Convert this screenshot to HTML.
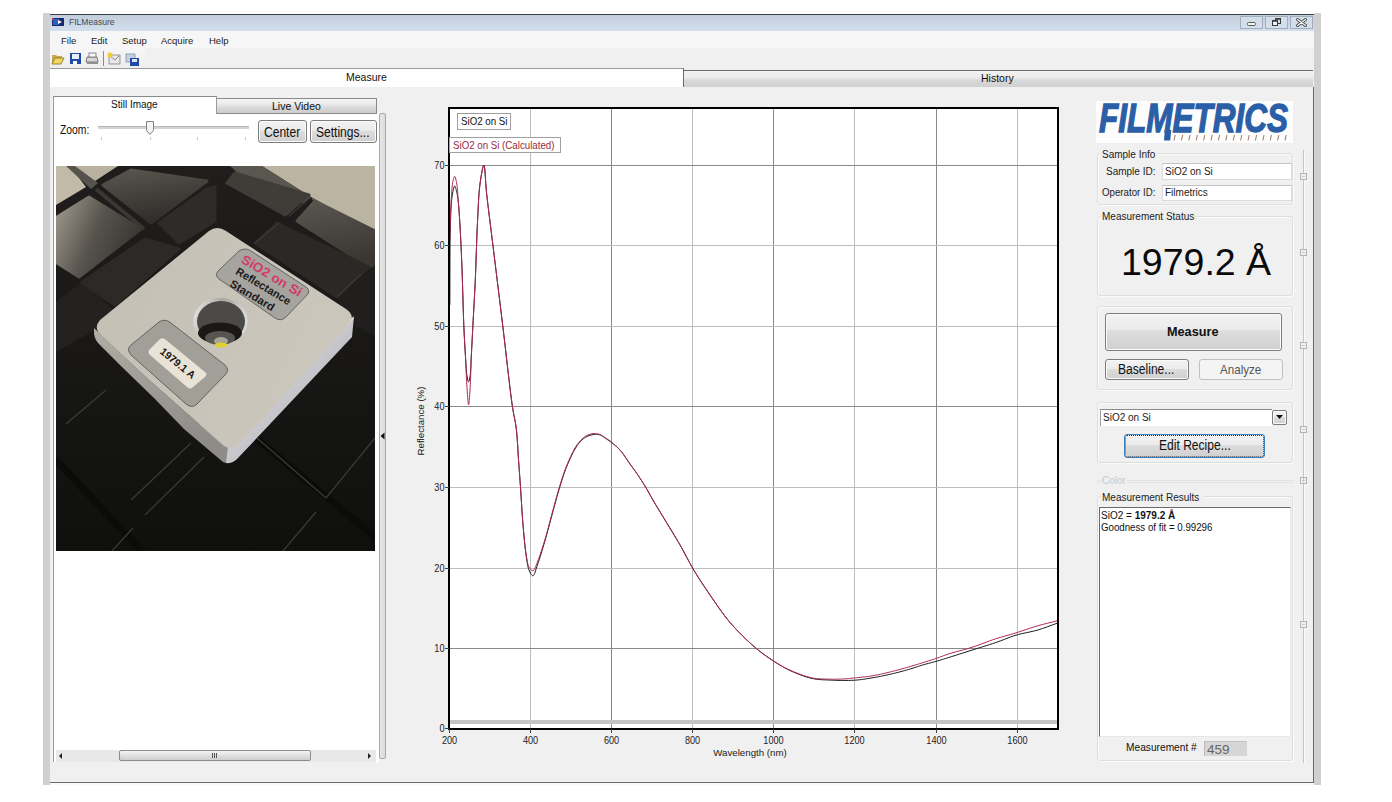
<!DOCTYPE html>
<html><head><meta charset="utf-8">
<style>
*{margin:0;padding:0;box-sizing:border-box}
html,body{width:1392px;height:802px;overflow:hidden;background:#fff;font-family:"Liberation Sans",sans-serif;color:#111}
.abs{position:absolute}
.t{position:absolute;white-space:nowrap;line-height:1}
.btn{position:absolute;border:1px solid #7c7c7c;border-radius:3px;background:linear-gradient(#f2f2f2 0%,#ebebeb 45%,#dddddd 46%,#d0d0d0 100%);box-shadow:inset 0 0 0 1px #fbfbfb}
.grp{position:absolute;border:1px solid #dedede;border-radius:3px;box-shadow:1px 1px 0 #fafafa inset, 1px 1px 0 #fafafa}
.sx{transform-origin:0 0;transform:scaleX(.86)}
.tb{position:absolute;background:#fff;border:1px solid #dcdcdc;border-top-color:#c4c4c4}
</style></head><body>
<!-- window frame -->
<div class="abs" style="left:43px;top:13px;width:7px;height:772px;background:#d0d0d0"></div>
<div class="abs" style="left:1314px;top:13px;width:7px;height:772px;background:#d0d0d0"></div>
<div class="abs" style="left:50px;top:14px;width:1264px;height:1px;background:#404040"></div>
<div class="abs" style="left:50px;top:15px;width:1264px;height:16px;background:linear-gradient(#c3cedd,#d3dfed)"></div>
<div class="abs" style="left:50px;top:31px;width:1264px;height:17px;background:#f6f6f6"></div>
<div class="abs" style="left:50px;top:48px;width:1264px;height:20px;background:#f0f0f0"></div>
<div class="abs" style="left:50px;top:48px;width:95px;height:19px;background:linear-gradient(#f6f6f6,#eeeeee)"></div>
<!-- title -->
<svg class="abs" style="left:52px;top:18px" width="12" height="8" viewBox="0 0 12 8"><rect width="12" height="8" fill="#1a2a6a"/><rect x="1" y="1" width="6" height="6" fill="#2a60c0"/><path d="M6,2 L10,4 L6,6z" fill="#fff"/><rect x="0" y="0" width="2" height="2" fill="#c03060"/></svg>
<div class="t" style="left:69px;top:18px;font-size:9px;color:#4a4a4a;transform-origin:0 0;transform:scaleX(.95)">FILMeasure</div>
<!-- title buttons -->
<svg class="abs" style="left:1236px;top:14px" width="80" height="17" viewBox="1236 14 80 17">
<rect x="1240.5" y="16.5" width="22" height="12" fill="#d3deeb" stroke="#a4adba"/>
<rect x="1265.5" y="16.5" width="22" height="12" fill="#d3deeb" stroke="#a4adba"/>
<rect x="1290.5" y="16.5" width="22" height="12" fill="#d3deeb" stroke="#a4adba"/>
<rect x="1247.5" y="22.5" width="8" height="3" rx="1" fill="#f4f4f4" stroke="#5a5a5a"/>
<rect x="1275.5" y="18.5" width="5" height="5" fill="none" stroke="#3a3a3a"/><line x1="1275" y1="19" x2="1281" y2="19" stroke="#3a3a3a" stroke-width="1.5"/>
<rect x="1272.5" y="20.5" width="5" height="5" fill="#e8eef6" stroke="#3a3a3a"/><line x1="1272" y1="21" x2="1278" y2="21" stroke="#3a3a3a" stroke-width="1.5"/>
<path d="M1297.5,19.5 L1305.5,25.5 M1305.5,19.5 L1297.5,25.5" stroke="#4a4a4a" stroke-width="3" stroke-linecap="round"/>
<path d="M1297.5,19.5 L1305.5,25.5 M1305.5,19.5 L1297.5,25.5" stroke="#fafafa" stroke-width="1.2" stroke-linecap="round"/>
</svg>
<!-- menu -->
<div class="t" style="left:61px;top:36px;font-size:9.5px;color:#222">File</div>
<div class="t" style="left:91px;top:36px;font-size:9.5px;color:#222">Edit</div>
<div class="t" style="left:122px;top:36px;font-size:9.5px;color:#222">Setup</div>
<div class="t" style="left:161px;top:36px;font-size:9.5px;color:#222">Acquire</div>
<div class="t" style="left:209px;top:36px;font-size:9.5px;color:#222">Help</div>
<!-- toolbar icons -->
<svg class="abs" style="left:51px;top:51px" width="90" height="15" viewBox="0 0 90 15">
 <path d="M1,4 L5,4 L6,5 L11,5 L11,7 L4,7 L1,13z" fill="#c8a850"/><path d="M1,13 L4,7 L13,7 L10,13z" fill="#f0d860"/><path d="M1,13 L4,7 L13,7 L10,13z" fill="none" stroke="#8a6a20" stroke-width="0.8"/>
 <rect x="19" y="2" width="11" height="11" fill="#1e4aa8"/><rect x="21" y="3" width="7" height="5" fill="#e8eef8"/><rect x="22" y="10" width="4" height="3" fill="#fff"/>
 <path d="M36,6 L46,6 L47,11 L35,11z" fill="#d8d8d8" stroke="#606060" stroke-width="0.8"/><rect x="38" y="2" width="7" height="4" fill="#f8f8f8" stroke="#707070" stroke-width="0.8"/><rect x="36" y="11" width="11" height="2" fill="#909090"/>
 <rect x="52" y="0" width="1" height="15" fill="#8a8a8a"/>
 <rect x="58" y="4" width="11" height="9" fill="#e8e8e8" stroke="#808080" stroke-width="0.8"/><path d="M59,5 L64,9 L68,5" fill="none" stroke="#707070" stroke-width="0.8"/><circle cx="59" cy="4" r="2.5" fill="#e8d030"/>
 <rect x="75" y="3" width="9" height="8" fill="#c8d0e0" stroke="#8090a8" stroke-width="0.8"/><rect x="79" y="7" width="9" height="8" fill="#1e4aa8"/><rect x="81" y="8" width="5" height="3" fill="#e0e8f8"/>
</svg>
<!-- main tabs -->
<div class="abs" style="left:50px;top:68px;width:1264px;height:19px;background:#f0f0f0"></div>
<div class="abs" style="left:50px;top:68px;width:634px;height:19px;background:#fff;border-top:1px solid #9a9a9a;border-right:1px solid #6a6a6a"></div>
<div class="t" style="left:346px;top:72px;font-size:10.5px;color:#111">Measure</div>
<div class="abs" style="left:684px;top:70px;width:629px;height:17px;border-top:1px solid #6a6a6a;background:linear-gradient(#f2f2f2 0%,#ececec 40%,#d8d8d8 60%,#d0d0d0 100%)"></div>
<div class="t" style="left:981px;top:73px;font-size:10.5px;color:#111">History</div>
<!-- page body -->
<div class="abs" style="left:50px;top:87px;width:1264px;height:696px;background:#f0f0f0;border-right:1px solid #6a6a6a;border-bottom:1px solid #6a6a6a"></div>
<div class="abs" style="left:50px;top:783px;width:1264px;height:2px;background:#fafafa"></div>

<!-- left panel -->
<div class="abs" style="left:53px;top:113px;width:326px;height:649px;background:#fff;border-left:1px solid #9a9a9a"></div>
<div class="abs" style="left:53px;top:96px;width:164px;height:18px;background:#fff;border-top:1px solid #8a8a8a;border-left:1px solid #9a9a9a;border-right:1px solid #9a9a9a"></div>
<div class="t" style="left:111px;top:100px;font-size:10px;color:#111">Still Image</div>
<div class="abs" style="left:217px;top:98px;width:160px;height:16px;border:1px solid #8a8a8a;border-left:none;background:linear-gradient(#f4f4f4 0%,#ececec 35%,#d6d6d6 65%,#cdcdcd 100%)"></div>
<div class="t" style="left:272px;top:101px;font-size:10.5px;color:#111">Live Video</div>
<div class="t sx" style="left:60px;top:124px;font-size:12px;color:#111">Zoom:</div>
<div class="abs" style="left:98px;top:126px;width:151px;height:3px;background:#d4d4d4;border-top:1px solid #b8b8b8"></div>
<svg class="abs" style="left:145px;top:120px" width="10" height="16" viewBox="0 0 10 16"><path d="M1.5,1.5 h7 v9 l-3.5,4 l-3.5,-4z" fill="#f4f4f4" stroke="#808080"/></svg>
<div class="abs" style="left:101px;top:137px;width:1px;height:3px;background:#c8c8c8"></div>
<div class="abs" style="left:150px;top:137px;width:1px;height:3px;background:#c8c8c8"></div>
<div class="abs" style="left:197px;top:137px;width:1px;height:3px;background:#c8c8c8"></div>
<div class="abs" style="left:245px;top:137px;width:1px;height:3px;background:#c8c8c8"></div>
<div class="btn" style="left:258px;top:120px;width:49px;height:23px"></div>
<div class="t sx" style="left:264px;top:125px;font-size:14px;color:#111">Center</div>
<div class="btn" style="left:310px;top:120px;width:67px;height:23px"></div>
<div class="t sx" style="left:316px;top:125px;font-size:14px;color:#111">Settings...</div>
<!-- photo -->
<svg class="abs" style="left:56px;top:166px" width="319" height="385" viewBox="56 166 319 385"><defs>
<linearGradient id="pbg" x1="0" y1="0" x2="0" y2="1"><stop offset="0" stop-color="#1f1e1c"/><stop offset="0.4" stop-color="#1a1917"/><stop offset="1" stop-color="#0f0f0e"/></linearGradient>
<linearGradient id="tile1" x1="0" y1="0.3" x2="1" y2="0.7"><stop offset="0" stop-color="#948e84"/><stop offset="0.45" stop-color="#56524c"/><stop offset="1" stop-color="#34312d"/></linearGradient>
<linearGradient id="tile2" x1="0" y1="0" x2="0.3" y2="1"><stop offset="0" stop-color="#5a5650"/><stop offset="0.5" stop-color="#45423d"/><stop offset="1" stop-color="#302e2b"/></linearGradient>
<linearGradient id="tileB" x1="0" y1="0" x2="0.2" y2="1"><stop offset="0" stop-color="#5a5650"/><stop offset="1" stop-color="#3a3733"/></linearGradient>
<linearGradient id="blk" x1="0" y1="0" x2="1" y2="0.4"><stop offset="0" stop-color="#c4bfb3"/><stop offset="1" stop-color="#ccc7bd"/></linearGradient>
<linearGradient id="sideL" x1="0" y1="0" x2="0.3" y2="1"><stop offset="0" stop-color="#b0ada6"/><stop offset="1" stop-color="#8e8c88"/></linearGradient>
<linearGradient id="sideR" x1="0" y1="0" x2="1" y2="1"><stop offset="0" stop-color="#e8e8ec"/><stop offset="1" stop-color="#a8a8ac"/></linearGradient>
<filter id="soft" x="-5%" y="-5%" width="110%" height="110%"><feGaussianBlur stdDeviation="0.9"/></filter>
<linearGradient id="ring" x1="0" y1="0" x2="1" y2="0.3"><stop offset="0" stop-color="#f0f0f0"/><stop offset="0.5" stop-color="#a8a6a0"/><stop offset="1" stop-color="#d8d8d8"/></linearGradient>
</defs><rect x="56" y="166" width="319" height="385" fill="url(#pbg)"/><g stroke-linejoin="round"><polygon points="56,166 70,166 86,187 56,205" fill="#c2baa8" /><polygon points="72,166 118,166 95,181" fill="#b9b19f" /><polygon points="262,166 375,166 375,233 311,197" fill="#bcb4a2" /><polygon points="66,166 75,166 98,183 91,189" fill="#56534d" /><line x1="96" y1="189" x2="144" y2="229" stroke="#3a3834" stroke-width="4"/><polygon points="230,166 262,166 311,197 303,203 240,175" fill="#5a5650" /><polygon points="311,197 375,233 375,240 315,204" fill="#66625b" /><polygon points="57,217 89,197 141,229 79,277 57,263" fill="url(#tile1)" stroke="url(#tile1)" stroke-width="3" stroke-linejoin="round"/><polygon points="103,185 131,170 207,181 151,223" fill="url(#tile2)" stroke="url(#tile2)" stroke-width="3" stroke-linejoin="round"/><polygon points="159,223 207,189 215,187 215,221 179,243" fill="#2e2c29" stroke="#2e2c29" stroke-width="3" stroke-linejoin="round"/><polygon points="81,283 145,239 179,249 115,305" fill="#2c2a27" stroke="#2c2a27" stroke-width="3" stroke-linejoin="round"/><polygon points="57,303 81,285 111,309 95,328 57,350" fill="#232220" stroke="#232220" stroke-width="3" stroke-linejoin="round"/><polygon points="227,183 235,173 309,195 285,215" fill="#403d39" stroke="#403d39" stroke-width="3" stroke-linejoin="round"/><polygon points="297,221 315,201 375,231 375,265 369,267" fill="url(#tileB)" stroke="url(#tileB)" stroke-width="3" stroke-linejoin="round"/><polygon points="255,243 277,223 369,267 337,297" fill="#2b2926" stroke="#2b2926" stroke-width="3" stroke-linejoin="round"/><polygon points="339,299 375,267 375,335 352,322" fill="#201f1d" stroke="#201f1d" stroke-width="3" stroke-linejoin="round"/><line x1="55" y1="459" x2="142" y2="551" stroke="#0b0b0a" stroke-width="7"/><line x1="253" y1="436" x2="375" y2="537" stroke="#0b0b0a" stroke-width="7"/></g><line x1="255" y1="243" x2="279" y2="223" stroke="#3c3a37" stroke-width="1.2"/><line x1="289" y1="216" x2="311" y2="197" stroke="#3c3a37" stroke-width="1.2"/><line x1="337" y1="297" x2="361" y2="274" stroke="#3c3a37" stroke-width="1.2"/><line x1="66" y1="424" x2="106" y2="390" stroke="#3c3a37" stroke-width="1.2"/><line x1="131" y1="500" x2="191" y2="443" stroke="#3c3a37" stroke-width="1.2"/><line x1="145" y1="515" x2="204" y2="457" stroke="#3c3a37" stroke-width="1.2"/><line x1="112" y1="551" x2="133" y2="528" stroke="#3c3a37" stroke-width="1.2"/><line x1="326" y1="498" x2="375" y2="438" stroke="#3c3a37" stroke-width="1.2"/><line x1="283" y1="551" x2="316" y2="512" stroke="#3c3a37" stroke-width="1.2"/><line x1="257" y1="438" x2="326" y2="498" stroke="#3c3a37" stroke-width="1.2"/><path d="M94,328 L148,379 L198,423 L236,447 L233,458 Q230,465 223,462 L184,429 L155,399 L122,367 L99,344 Q95,340 94,334 Z" fill="url(#sideL)"/><path d="M228,446 L354,316 L352,337 L238,458 Q233,464 226,463 Z" fill="url(#sideR)"/><line x1="236" y1="445" x2="353" y2="318" stroke="#f2f2f4" stroke-width="1.6"/><path d="M209,231 Q217,225 226,231 L346,309 Q356,316 349,324 L240,443 Q233,451 224,446 L198,423 L148,379 L101,335 Q93,328 100,320 Z" fill="url(#blk)"/><path d="M239,251 Q245,247 251,251 L306,287 Q311,291 307,295 L286,317 Q281,322 275,318 L219,279 Q214,275 219,270 Z" fill="#a6a49e" stroke="#5a5a58" stroke-width="0.9"/><g font-family="Liberation Sans, sans-serif" font-weight="bold" text-anchor="middle"><text transform="translate(269.5,279.5) rotate(31)" font-size="13" fill="#d23a6c" textLength="68" lengthAdjust="spacingAndGlyphs">SiO2 on Si</text><text transform="translate(261.4,289.4) rotate(31)" font-size="11" fill="#1a1a1a" textLength="62" lengthAdjust="spacingAndGlyphs">Reflectance</text><text transform="translate(250.4,298.6) rotate(31)" font-size="11" fill="#1a1a1a" textLength="50" lengthAdjust="spacingAndGlyphs">Standard</text></g><ellipse cx="220.5" cy="321" rx="27.2" ry="23.2" fill="url(#ring)"/><ellipse cx="221" cy="321.5" rx="24" ry="20.5" fill="#4c4a46"/><ellipse cx="220" cy="333" rx="22" ry="10.5" fill="#1a1918"/><ellipse cx="220" cy="338" rx="15" ry="7" fill="#57554f"/><ellipse cx="221" cy="341" rx="7" ry="4" fill="#a8a498"/><ellipse cx="221" cy="345" rx="6.5" ry="2.6" fill="#ddd030"/><path d="M159,322 Q165,318 171,323 L225,365 Q230,370 225,375 L197,404 Q192,409 186,404 L131,355 Q126,349 131,345 Z" fill="#a19f98" stroke="#5a5a58" stroke-width="0.9"/><path d="M160,339 Q163,337 166,340 L205,372 Q208,374 205,377 L193,387 Q190,390 187,387 L150,355 Q147,352 150,349 Z" fill="#e9e2d6"/><text transform="translate(175.5,366) rotate(39)" font-family="Liberation Sans, sans-serif" font-weight="bold" font-size="10.5" text-anchor="middle" fill="#151515" textLength="42" lengthAdjust="spacingAndGlyphs">1979.1 A</text></svg>
<!-- left scrollbars -->
<div class="abs" style="left:379px;top:113px;width:7px;height:646px;border:1px solid #a8a8a8;border-radius:2px;background:linear-gradient(90deg,#e8e8e8,#dadada)"></div>
<svg class="abs" style="left:380px;top:432px" width="6" height="8" viewBox="0 0 6 8"><path d="M4.5,0.5 L0.5,4 L4.5,7.5z" fill="#111"/></svg>
<div class="abs" style="left:56px;top:750px;width:320px;height:12px;background:#e8e8e8"></div>
<div class="abs" style="left:119px;top:750px;width:192px;height:11px;border:1px solid #8c8c8c;border-radius:2px;background:linear-gradient(#f4f4f4,#dedede 55%,#cfcfcf)"></div>
<div class="abs" style="left:212px;top:753px;width:1px;height:5px;background:#555"></div>
<div class="abs" style="left:214px;top:753px;width:1px;height:5px;background:#555"></div>
<div class="abs" style="left:216px;top:753px;width:1px;height:5px;background:#555"></div>
<svg class="abs" style="left:58px;top:752px" width="6" height="8"><path d="M4,1 L1,4 L4,7z" fill="#222"/></svg>
<svg class="abs" style="left:366px;top:752px" width="6" height="8"><path d="M2,1 L5,4 L2,7z" fill="#222"/></svg>

<!-- chart -->
<svg class="abs" style="left:0;top:0" width="1392" height="802" viewBox="0 0 1392 802">
<rect x="449" y="108" width="609" height="621" fill="#fff"/>
<line x1="530.5" y1="109" x2="530.5" y2="728" stroke="#bdbdbd" stroke-width="1"/><line x1="611.5" y1="109" x2="611.5" y2="728" stroke="#8a8a8a" stroke-width="1"/><line x1="692.5" y1="109" x2="692.5" y2="728" stroke="#bdbdbd" stroke-width="1"/><line x1="773.5" y1="109" x2="773.5" y2="728" stroke="#8a8a8a" stroke-width="1"/><line x1="854.5" y1="109" x2="854.5" y2="728" stroke="#bdbdbd" stroke-width="1"/><line x1="936.5" y1="109" x2="936.5" y2="728" stroke="#8a8a8a" stroke-width="1"/><line x1="1017.5" y1="109" x2="1017.5" y2="728" stroke="#bdbdbd" stroke-width="1"/><line x1="450" y1="648.5" x2="1058" y2="648.5" stroke="#8a8a8a" stroke-width="1"/><line x1="450" y1="568.5" x2="1058" y2="568.5" stroke="#bdbdbd" stroke-width="1"/><line x1="450" y1="487.5" x2="1058" y2="487.5" stroke="#bdbdbd" stroke-width="1"/><line x1="450" y1="406.5" x2="1058" y2="406.5" stroke="#8a8a8a" stroke-width="1"/><line x1="450" y1="326.5" x2="1058" y2="326.5" stroke="#bdbdbd" stroke-width="1"/><line x1="450" y1="245.5" x2="1058" y2="245.5" stroke="#bdbdbd" stroke-width="1"/><line x1="450" y1="165.5" x2="1058" y2="165.5" stroke="#8a8a8a" stroke-width="1"/>
<rect x="450" y="720" width="608" height="4" fill="#c4c4c4"/>
<path d="M449.80,305.00 L449.86,294.86 L449.89,284.36 L449.91,273.70 L449.93,263.12 L449.98,252.84 L450.06,243.07 L450.20,234.05 L450.40,226.00 L450.54,221.51 L450.68,217.24 L450.82,213.18 L450.98,209.35 L451.18,205.75 L451.42,202.38 L451.72,199.27 L452.10,196.40 L452.37,194.69 L452.67,192.93 L452.99,191.19 L453.33,189.57 L453.68,188.15 L454.03,187.02 L454.37,186.28 L454.70,186.00 L454.93,186.13 L455.16,186.52 L455.40,187.10 L455.63,187.83 L455.86,188.66 L456.08,189.53 L456.30,190.39 L456.50,191.20 L456.76,192.24 L456.99,193.32 L457.22,194.44 L457.43,195.61 L457.63,196.85 L457.83,198.15 L458.01,199.53 L458.20,201.00 L458.48,203.54 L458.74,206.34 L458.97,209.34 L459.19,212.51 L459.40,215.81 L459.60,219.18 L459.80,222.59 L460.00,226.00 L460.24,230.12 L460.47,234.41 L460.70,238.84 L460.92,243.34 L461.13,247.86 L461.33,252.34 L461.52,256.74 L461.70,261.00 L461.85,264.74 L461.99,268.37 L462.11,271.95 L462.23,275.49 L462.35,279.03 L462.46,282.61 L462.58,286.26 L462.70,290.00 L462.83,294.26 L462.96,298.63 L463.08,303.07 L463.20,307.55 L463.33,312.06 L463.47,316.55 L463.63,321.01 L463.80,325.40 L463.99,329.66 L464.20,334.00 L464.42,338.36 L464.65,342.68 L464.88,346.90 L465.12,350.99 L465.36,354.87 L465.60,358.50 L465.76,361.02 L465.91,363.48 L466.05,365.88 L466.19,368.18 L466.35,370.36 L466.53,372.41 L466.75,374.30 L467.00,376.00 L467.17,376.99 L467.36,378.01 L467.56,379.02 L467.77,379.96 L467.98,380.78 L468.19,381.42 L468.40,381.85 L468.60,382.00 L468.80,381.85 L469.00,381.42 L469.20,380.77 L469.40,379.95 L469.59,379.02 L469.77,378.01 L469.94,376.99 L470.10,376.00 L470.32,374.29 L470.50,372.41 L470.64,370.36 L470.75,368.18 L470.86,365.88 L470.96,363.48 L471.07,361.02 L471.20,358.50 L471.40,354.90 L471.60,351.08 L471.81,347.08 L472.02,342.93 L472.23,338.65 L472.45,334.29 L472.67,329.86 L472.90,325.40 L473.18,320.11 L473.48,314.68 L473.79,309.14 L474.10,303.50 L474.41,297.75 L474.72,291.91 L475.02,285.99 L475.30,280.00 L475.59,273.01 L475.87,265.71 L476.12,258.23 L476.37,250.68 L476.63,243.17 L476.89,235.81 L477.18,228.71 L477.50,222.00 L477.76,216.77 L478.00,211.62 L478.24,206.58 L478.49,201.67 L478.78,196.92 L479.12,192.38 L479.52,188.06 L480.00,184.00 L480.41,181.04 L480.89,177.88 L481.40,174.69 L481.94,171.68 L482.47,169.02 L482.99,166.90 L483.48,165.49 L483.90,165.00 L484.32,165.76 L484.67,167.81 L484.96,170.89 L485.23,174.74 L485.50,179.07 L485.78,183.64 L486.11,188.17 L486.50,192.40 L487.14,198.17 L487.86,204.29 L488.64,210.70 L489.46,217.39 L490.32,224.29 L491.20,231.37 L492.10,238.59 L493.00,245.90 L494.12,255.07 L495.29,264.63 L496.50,274.49 L497.73,284.57 L498.98,294.78 L500.24,305.02 L501.48,315.23 L502.70,325.30 L503.94,335.75 L505.21,346.73 L506.48,357.93 L507.75,369.04 L509.00,379.75 L510.20,389.76 L511.34,398.74 L512.40,406.40 L512.93,409.73 L513.45,412.66 L513.96,415.30 L514.45,417.75 L514.93,420.14 L515.38,422.57 L515.81,425.15 L516.20,428.00 L516.64,431.94 L517.01,436.13 L517.34,440.51 L517.63,444.98 L517.90,449.48 L518.16,453.92 L518.42,458.22 L518.70,462.30 L518.94,465.58 L519.17,468.71 L519.39,471.74 L519.61,474.73 L519.82,477.73 L520.04,480.79 L520.27,483.96 L520.50,487.30 L520.79,491.64 L521.08,496.20 L521.37,500.92 L521.66,505.74 L521.97,510.59 L522.29,515.41 L522.64,520.14 L523.00,524.70 L523.35,528.83 L523.71,533.02 L524.09,537.20 L524.47,541.31 L524.88,545.31 L525.30,549.13 L525.74,552.71 L526.20,556.00 L526.50,558.07 L526.79,560.06 L527.07,561.96 L527.36,563.78 L527.69,565.49 L528.06,567.11 L528.49,568.61 L529.00,570.00 L529.41,570.97 L529.87,571.97 L530.36,572.96 L530.87,573.88 L531.39,574.67 L531.91,575.29 L532.42,575.69 L532.90,575.80 L533.49,575.47 L534.06,574.66 L534.61,573.46 L535.16,571.97 L535.70,570.29 L536.25,568.50 L536.82,566.71 L537.40,565.00 L538.29,562.48 L539.21,559.72 L540.15,556.79 L541.11,553.72 L542.07,550.56 L543.03,547.35 L543.98,544.15 L544.90,541.00 L545.87,537.64 L546.83,534.20 L547.78,530.71 L548.72,527.20 L549.66,523.70 L550.58,520.23 L551.50,516.82 L552.40,513.50 L553.20,510.57 L553.98,507.68 L554.74,504.83 L555.50,502.02 L556.26,499.23 L557.02,496.47 L557.80,493.73 L558.60,491.00 L559.38,488.40 L560.17,485.78 L560.97,483.17 L561.77,480.59 L562.58,478.05 L563.39,475.60 L564.20,473.24 L565.00,471.00 L565.62,469.33 L566.24,467.74 L566.86,466.20 L567.48,464.72 L568.10,463.26 L568.72,461.83 L569.36,460.42 L570.00,459.00 L570.60,457.68 L571.21,456.37 L571.82,455.08 L572.43,453.80 L573.06,452.54 L573.69,451.32 L574.34,450.14 L575.00,449.00 L575.59,448.03 L576.18,447.09 L576.77,446.17 L577.38,445.28 L578.00,444.42 L578.64,443.58 L579.31,442.78 L580.00,442.00 L580.68,441.28 L581.38,440.58 L582.09,439.89 L582.82,439.24 L583.57,438.62 L584.35,438.03 L585.16,437.49 L586.00,437.00 L586.92,436.53 L587.90,436.10 L588.91,435.72 L589.95,435.37 L590.99,435.07 L592.03,434.83 L593.04,434.63 L594.00,434.50 L594.79,434.43 L595.57,434.40 L596.34,434.40 L597.10,434.44 L597.85,434.52 L598.58,434.64 L599.30,434.80 L600.00,435.00 L600.66,435.25 L601.30,435.56 L601.92,435.91 L602.53,436.29 L603.13,436.71 L603.74,437.13 L604.36,437.57 L605.00,438.00 L605.76,438.50 L606.54,439.01 L607.32,439.54 L608.12,440.08 L608.92,440.65 L609.74,441.24 L610.56,441.86 L611.40,442.50 L612.43,443.31 L613.49,444.13 L614.57,444.99 L615.67,445.89 L616.76,446.83 L617.86,447.83 L618.94,448.88 L620.00,450.00 L621.29,451.51 L622.57,453.17 L623.85,454.94 L625.12,456.78 L626.37,458.65 L627.60,460.50 L628.81,462.30 L630.00,464.00 L631.02,465.42 L632.02,466.80 L633.00,468.15 L633.97,469.48 L634.93,470.80 L635.89,472.14 L636.84,473.50 L637.80,474.90 L638.82,476.41 L639.84,477.95 L640.85,479.50 L641.87,481.07 L642.87,482.65 L643.87,484.24 L644.84,485.82 L645.80,487.40 L646.70,488.92 L647.56,490.42 L648.39,491.91 L649.22,493.41 L650.05,494.93 L650.92,496.49 L651.83,498.11 L652.80,499.80 L654.14,502.08 L655.57,504.47 L657.06,506.93 L658.60,509.47 L660.18,512.06 L661.78,514.69 L663.39,517.34 L665.00,520.00 L666.81,522.99 L668.67,526.03 L670.56,529.13 L672.48,532.27 L674.39,535.42 L676.30,538.59 L678.17,541.75 L680.00,544.90 L681.75,548.01 L683.46,551.14 L685.13,554.28 L686.79,557.42 L688.46,560.55 L690.15,563.68 L691.89,566.80 L693.70,569.90 L695.60,573.04 L697.54,576.15 L699.51,579.25 L701.51,582.34 L703.55,585.43 L705.63,588.54 L707.74,591.65 L709.90,594.80 L712.24,598.22 L714.60,601.68 L717.00,605.18 L719.45,608.68 L721.95,612.17 L724.52,615.62 L727.17,619.00 L729.90,622.30 L732.81,625.62 L735.85,628.95 L738.99,632.25 L742.19,635.49 L745.41,638.64 L748.61,641.66 L751.76,644.53 L754.80,647.20 L757.21,649.22 L759.58,651.14 L761.93,652.95 L764.27,654.68 L766.58,656.33 L768.89,657.93 L771.20,659.48 L773.50,661.00 L775.56,662.34 L777.58,663.63 L779.57,664.87 L781.57,666.06 L783.59,667.22 L785.66,668.35 L787.78,669.44 L790.00,670.50 L792.60,671.68 L795.34,672.85 L798.16,674.00 L801.04,675.09 L803.92,676.12 L806.77,677.04 L809.54,677.84 L812.20,678.50 L814.28,678.92 L816.28,679.23 L818.21,679.45 L820.13,679.61 L822.06,679.73 L824.04,679.82 L826.11,679.90 L828.30,680.00 L831.33,680.14 L834.57,680.26 L837.97,680.36 L841.44,680.43 L844.93,680.45 L848.34,680.43 L851.63,680.35 L854.70,680.20 L857.04,680.03 L859.29,679.81 L861.47,679.55 L863.59,679.26 L865.69,678.94 L867.77,678.60 L869.87,678.25 L872.00,677.90 L874.16,677.53 L876.31,677.15 L878.46,676.75 L880.62,676.33 L882.76,675.89 L884.91,675.44 L887.06,674.98 L889.20,674.50 L891.36,674.00 L893.51,673.49 L895.66,672.96 L897.81,672.42 L899.96,671.86 L902.11,671.29 L904.25,670.70 L906.40,670.10 L908.58,669.46 L910.79,668.78 L913.01,668.08 L915.22,667.37 L917.41,666.66 L919.56,665.97 L921.66,665.31 L923.70,664.70 L925.37,664.23 L926.99,663.78 L928.57,663.36 L930.13,662.96 L931.67,662.56 L933.21,662.15 L934.75,661.74 L936.30,661.30 L937.83,660.85 L939.32,660.41 L940.79,659.96 L942.27,659.51 L943.77,659.04 L945.33,658.55 L946.97,658.04 L948.70,657.50 L951.26,656.70 L954.01,655.83 L956.90,654.91 L959.89,653.96 L962.94,652.98 L966.00,652.01 L969.04,651.04 L972.00,650.10 L974.93,649.18 L977.89,648.26 L980.85,647.35 L983.80,646.43 L986.75,645.52 L989.67,644.59 L992.56,643.65 L995.40,642.70 L998.03,641.77 L1000.61,640.80 L1003.16,639.82 L1005.69,638.83 L1008.22,637.86 L1010.75,636.92 L1013.31,636.02 L1015.90,635.20 L1018.55,634.46 L1021.24,633.80 L1023.94,633.20 L1026.66,632.62 L1029.37,632.05 L1032.08,631.46 L1034.76,630.82 L1037.40,630.10 L1039.96,629.32 L1042.49,628.49 L1045.01,627.62 L1047.51,626.72 L1050.01,625.81 L1052.50,624.90 L1054.99,623.99 L1057.50,623.10" fill="none" stroke="#1a1a22" stroke-width="1"/>
<path d="M449.80,240.00 L449.97,234.90 L450.12,229.65 L450.26,224.35 L450.41,219.08 L450.57,213.92 L450.75,208.96 L450.96,204.29 L451.20,200.00 L451.38,197.20 L451.55,194.45 L451.74,191.79 L451.93,189.25 L452.15,186.86 L452.39,184.67 L452.67,182.71 L453.00,181.00 L453.19,180.18 L453.39,179.36 L453.60,178.57 L453.82,177.84 L454.04,177.21 L454.27,176.72 L454.49,176.41 L454.70,176.30 L454.97,176.51 L455.25,177.08 L455.53,177.94 L455.81,179.01 L456.08,180.23 L456.34,181.51 L456.58,182.79 L456.80,184.00 L457.06,185.69 L457.28,187.49 L457.46,189.39 L457.62,191.39 L457.76,193.45 L457.89,195.59 L458.04,197.77 L458.20,200.00 L458.43,202.92 L458.66,205.97 L458.89,209.12 L459.12,212.36 L459.35,215.69 L459.57,219.08 L459.79,222.52 L460.00,226.00 L460.24,230.15 L460.47,234.46 L460.70,238.89 L460.92,243.38 L461.13,247.89 L461.33,252.36 L461.52,256.75 L461.70,261.00 L461.85,264.74 L461.99,268.37 L462.11,271.95 L462.23,275.49 L462.35,279.03 L462.46,282.61 L462.58,286.26 L462.70,290.00 L462.83,294.26 L462.96,298.63 L463.08,303.07 L463.20,307.55 L463.33,312.06 L463.47,316.55 L463.63,321.01 L463.80,325.40 L463.99,329.62 L464.21,333.84 L464.44,338.06 L464.68,342.26 L464.93,346.42 L465.17,350.52 L465.39,354.55 L465.60,358.50 L465.76,361.95 L465.91,365.35 L466.04,368.70 L466.17,372.01 L466.30,375.27 L466.45,378.47 L466.61,381.61 L466.80,384.70 L466.99,387.62 L467.20,390.86 L467.43,394.20 L467.66,397.43 L467.90,400.33 L468.14,402.67 L468.37,404.23 L468.60,404.80 L468.82,404.23 L469.05,402.66 L469.28,400.32 L469.51,397.43 L469.73,394.20 L469.94,390.86 L470.13,387.62 L470.30,384.70 L470.46,381.61 L470.59,378.47 L470.69,375.27 L470.78,372.01 L470.87,368.70 L470.96,365.35 L471.07,361.94 L471.20,358.50 L471.38,354.58 L471.57,350.62 L471.77,346.60 L471.98,342.52 L472.21,338.36 L472.44,334.13 L472.67,329.81 L472.90,325.40 L473.18,320.11 L473.48,314.68 L473.79,309.14 L474.10,303.50 L474.41,297.75 L474.72,291.91 L475.02,285.99 L475.30,280.00 L475.59,273.01 L475.87,265.71 L476.12,258.23 L476.37,250.68 L476.63,243.17 L476.89,235.81 L477.18,228.71 L477.50,222.00 L477.76,216.77 L478.00,211.62 L478.24,206.58 L478.49,201.67 L478.78,196.92 L479.12,192.38 L479.52,188.06 L480.00,184.00 L480.41,181.04 L480.89,177.88 L481.40,174.69 L481.94,171.68 L482.47,169.02 L482.99,166.90 L483.48,165.49 L483.90,165.00 L484.32,165.76 L484.67,167.81 L484.96,170.89 L485.23,174.74 L485.50,179.07 L485.78,183.64 L486.11,188.17 L486.50,192.40 L487.14,198.17 L487.86,204.29 L488.64,210.70 L489.46,217.39 L490.32,224.29 L491.20,231.37 L492.10,238.59 L493.00,245.90 L494.12,255.07 L495.29,264.63 L496.50,274.49 L497.73,284.57 L498.98,294.78 L500.24,305.02 L501.48,315.23 L502.70,325.30 L503.94,335.75 L505.21,346.73 L506.48,357.93 L507.75,369.04 L509.00,379.75 L510.20,389.76 L511.34,398.74 L512.40,406.40 L512.93,409.73 L513.45,412.66 L513.96,415.30 L514.45,417.75 L514.93,420.14 L515.38,422.57 L515.81,425.15 L516.20,428.00 L516.64,431.94 L517.01,436.13 L517.34,440.51 L517.63,444.98 L517.90,449.48 L518.16,453.92 L518.42,458.22 L518.70,462.30 L518.94,465.58 L519.17,468.71 L519.39,471.74 L519.61,474.73 L519.82,477.73 L520.04,480.79 L520.27,483.96 L520.50,487.30 L520.79,491.64 L521.08,496.22 L521.36,500.96 L521.66,505.80 L521.97,510.66 L522.29,515.47 L522.63,520.18 L523.00,524.70 L523.35,528.69 L523.70,532.72 L524.07,536.74 L524.46,540.68 L524.86,544.50 L525.28,548.13 L525.73,551.51 L526.20,554.60 L526.50,556.47 L526.77,558.28 L527.04,560.01 L527.33,561.64 L527.65,563.18 L528.02,564.59 L528.46,565.87 L529.00,567.00 L529.41,567.70 L529.87,568.40 L530.36,569.06 L530.88,569.66 L531.40,570.17 L531.92,570.55 L532.42,570.77 L532.90,570.80 L533.50,570.50 L534.08,569.83 L534.64,568.87 L535.19,567.68 L535.73,566.33 L536.28,564.89 L536.83,563.42 L537.40,562.00 L538.31,559.74 L539.24,557.23 L540.19,554.53 L541.15,551.67 L542.11,548.71 L543.06,545.70 L543.99,542.68 L544.90,539.70 L545.88,536.39 L546.85,532.98 L547.80,529.49 L548.74,525.97 L549.67,522.44 L550.59,518.95 L551.50,515.52 L552.40,512.20 L553.20,509.28 L553.98,506.40 L554.74,503.57 L555.50,500.76 L556.26,497.99 L557.02,495.24 L557.80,492.51 L558.60,489.80 L559.38,487.21 L560.17,484.61 L560.97,482.01 L561.77,479.44 L562.58,476.92 L563.39,474.48 L564.20,472.13 L565.00,469.90 L565.62,468.24 L566.24,466.64 L566.86,465.11 L567.48,463.62 L568.10,462.16 L568.72,460.73 L569.36,459.32 L570.00,457.90 L570.60,456.58 L571.21,455.27 L571.82,453.97 L572.43,452.69 L573.05,451.44 L573.69,450.22 L574.34,449.04 L575.00,447.90 L575.59,446.94 L576.18,446.01 L576.77,445.11 L577.38,444.24 L578.00,443.39 L578.65,442.56 L579.31,441.77 L580.00,441.00 L580.68,440.28 L581.38,439.58 L582.09,438.90 L582.82,438.24 L583.57,437.62 L584.35,437.03 L585.16,436.49 L586.00,436.00 L586.92,435.53 L587.90,435.09 L588.91,434.69 L589.95,434.33 L591.00,434.03 L592.03,433.78 L593.04,433.60 L594.00,433.50 L594.79,433.47 L595.57,433.50 L596.34,433.57 L597.10,433.69 L597.85,433.85 L598.58,434.04 L599.30,434.26 L600.00,434.50 L600.66,434.77 L601.30,435.09 L601.92,435.44 L602.52,435.82 L603.13,436.23 L603.74,436.65 L604.36,437.07 L605.00,437.50 L605.76,438.00 L606.54,438.50 L607.33,439.03 L608.12,439.57 L608.93,440.13 L609.75,440.72 L610.57,441.34 L611.40,442.00 L612.44,442.85 L613.50,443.73 L614.58,444.66 L615.67,445.63 L616.76,446.64 L617.85,447.71 L618.93,448.83 L620.00,450.00 L621.28,451.54 L622.56,453.21 L623.84,454.98 L625.11,456.81 L626.36,458.67 L627.60,460.51 L628.81,462.30 L630.00,464.00 L631.02,465.42 L632.02,466.80 L633.00,468.15 L633.97,469.48 L634.93,470.80 L635.89,472.14 L636.84,473.50 L637.80,474.90 L638.82,476.41 L639.84,477.95 L640.85,479.50 L641.87,481.07 L642.87,482.65 L643.87,484.24 L644.84,485.82 L645.80,487.40 L646.70,488.92 L647.56,490.42 L648.39,491.91 L649.22,493.41 L650.05,494.93 L650.92,496.49 L651.83,498.11 L652.80,499.80 L654.14,502.08 L655.57,504.47 L657.06,506.93 L658.60,509.47 L660.18,512.06 L661.78,514.69 L663.39,517.34 L665.00,520.00 L666.81,522.99 L668.67,526.03 L670.56,529.13 L672.48,532.27 L674.39,535.42 L676.30,538.59 L678.17,541.75 L680.00,544.90 L681.75,548.01 L683.46,551.14 L685.13,554.28 L686.79,557.42 L688.46,560.55 L690.15,563.68 L691.89,566.80 L693.70,569.90 L695.60,573.04 L697.54,576.15 L699.51,579.25 L701.51,582.34 L703.55,585.43 L705.63,588.54 L707.74,591.65 L709.90,594.80 L712.24,598.22 L714.60,601.68 L717.00,605.18 L719.45,608.68 L721.95,612.17 L724.52,615.62 L727.17,619.00 L729.90,622.30 L732.81,625.62 L735.85,628.95 L738.99,632.25 L742.19,635.49 L745.41,638.64 L748.61,641.66 L751.76,644.53 L754.80,647.20 L757.21,649.23 L759.58,651.14 L761.93,652.96 L764.26,654.70 L766.58,656.36 L768.89,657.95 L771.19,659.50 L773.50,661.00 L775.56,662.31 L777.57,663.57 L779.57,664.77 L781.57,665.93 L783.59,667.04 L785.66,668.12 L787.79,669.17 L790.00,670.20 L792.60,671.34 L795.34,672.48 L798.17,673.59 L801.04,674.65 L803.92,675.63 L806.77,676.52 L809.54,677.28 L812.20,677.90 L814.31,678.28 L816.37,678.56 L818.39,678.76 L820.38,678.88 L822.35,678.96 L824.32,679.01 L826.30,679.05 L828.30,679.10 L830.34,679.15 L832.41,679.18 L834.49,679.18 L836.57,679.16 L838.63,679.12 L840.63,679.06 L842.56,678.99 L844.40,678.90 L845.78,678.81 L847.08,678.71 L848.32,678.60 L849.53,678.48 L850.75,678.34 L851.99,678.20 L853.30,678.05 L854.70,677.90 L856.65,677.70 L858.72,677.50 L860.87,677.28 L863.08,677.05 L865.33,676.81 L867.58,676.54 L869.82,676.24 L872.00,675.90 L874.16,675.52 L876.32,675.11 L878.47,674.67 L880.62,674.21 L882.77,673.73 L884.91,673.23 L887.06,672.72 L889.20,672.20 L891.36,671.67 L893.51,671.13 L895.66,670.56 L897.81,669.99 L899.96,669.40 L902.10,668.81 L904.25,668.21 L906.40,667.60 L908.58,666.97 L910.79,666.33 L913.01,665.67 L915.22,665.00 L917.42,664.33 L919.57,663.67 L921.67,663.03 L923.70,662.40 L925.37,661.88 L927.00,661.38 L928.58,660.89 L930.14,660.41 L931.68,659.92 L933.21,659.43 L934.75,658.92 L936.30,658.40 L937.83,657.86 L939.32,657.32 L940.78,656.76 L942.26,656.20 L943.76,655.63 L945.32,655.06 L946.96,654.48 L948.70,653.90 L951.26,653.11 L954.00,652.33 L956.90,651.54 L959.90,650.74 L962.95,649.92 L966.01,649.08 L969.05,648.21 L972.00,647.30 L974.94,646.32 L977.90,645.27 L980.85,644.19 L983.80,643.08 L986.73,641.98 L989.65,640.90 L992.54,639.87 L995.40,638.90 L998.01,638.07 L1000.60,637.30 L1003.15,636.56 L1005.70,635.84 L1008.23,635.13 L1010.77,634.42 L1013.33,633.68 L1015.90,632.90 L1018.57,632.05 L1021.26,631.17 L1023.96,630.27 L1026.66,629.35 L1029.36,628.44 L1032.05,627.56 L1034.74,626.70 L1037.40,625.90 L1039.94,625.18 L1042.46,624.50 L1044.97,623.84 L1047.48,623.21 L1049.98,622.59 L1052.49,621.97 L1054.99,621.34 L1057.50,620.70" fill="none" stroke="#b02850" stroke-width="1"/>
<rect x="449" y="108" width="609" height="621" fill="none" stroke="#000" stroke-width="2"/>
<line x1="445" y1="728.5" x2="449" y2="728.5" stroke="#404040"/><line x1="445" y1="648.5" x2="449" y2="648.5" stroke="#404040"/><line x1="445" y1="568.5" x2="449" y2="568.5" stroke="#404040"/><line x1="445" y1="487.5" x2="449" y2="487.5" stroke="#404040"/><line x1="445" y1="406.5" x2="449" y2="406.5" stroke="#404040"/><line x1="445" y1="326.5" x2="449" y2="326.5" stroke="#404040"/><line x1="445" y1="245.5" x2="449" y2="245.5" stroke="#404040"/><line x1="445" y1="165.5" x2="449" y2="165.5" stroke="#404040"/><line x1="449.5" y1="729" x2="449.5" y2="733" stroke="#404040"/><line x1="530.5" y1="729" x2="530.5" y2="733" stroke="#404040"/><line x1="611.5" y1="729" x2="611.5" y2="733" stroke="#404040"/><line x1="692.5" y1="729" x2="692.5" y2="733" stroke="#404040"/><line x1="773.5" y1="729" x2="773.5" y2="733" stroke="#404040"/><line x1="854.5" y1="729" x2="854.5" y2="733" stroke="#404040"/><line x1="936.5" y1="729" x2="936.5" y2="733" stroke="#404040"/><line x1="1017.5" y1="729" x2="1017.5" y2="733" stroke="#404040"/>
<g font-family="Liberation Sans, sans-serif" font-size="10.5" fill="#222"><text transform="translate(444.5,732.1) scale(.87,1)" text-anchor="end">0</text><text transform="translate(444.5,652.1) scale(.87,1)" text-anchor="end">10</text><text transform="translate(444.5,572.1) scale(.87,1)" text-anchor="end">20</text><text transform="translate(444.5,491.1) scale(.87,1)" text-anchor="end">30</text><text transform="translate(444.5,410.1) scale(.87,1)" text-anchor="end">40</text><text transform="translate(444.5,330.1) scale(.87,1)" text-anchor="end">50</text><text transform="translate(444.5,249.1) scale(.87,1)" text-anchor="end">60</text><text transform="translate(444.5,169.1) scale(.87,1)" text-anchor="end">70</text><text transform="translate(449.5,744) scale(.87,1)" text-anchor="middle">200</text><text transform="translate(530.5,744) scale(.87,1)" text-anchor="middle">400</text><text transform="translate(611.5,744) scale(.87,1)" text-anchor="middle">600</text><text transform="translate(692.5,744) scale(.87,1)" text-anchor="middle">800</text><text transform="translate(773.5,744) scale(.87,1)" text-anchor="middle">1000</text><text transform="translate(854.5,744) scale(.87,1)" text-anchor="middle">1200</text><text transform="translate(936.5,744) scale(.87,1)" text-anchor="middle">1400</text><text transform="translate(1017.5,744) scale(.87,1)" text-anchor="middle">1600</text>
<text x="750" y="756" text-anchor="middle" font-size="9.7">Wavelength (nm)</text>
<text transform="translate(424,421) rotate(-90)" text-anchor="middle" font-size="9.7">Reflectance (%)</text>
</g>
<rect x="457.5" y="113.5" width="53" height="16" fill="#fff" stroke="#a0a0a0"/>
<text transform="translate(461,125.3) scale(.9,1)" font-family="Liberation Sans, sans-serif" font-size="10.8" fill="#111">SiO2 on Si</text>
<rect x="449.5" y="137.5" width="111" height="15" fill="#fff" stroke="#a0a0a0"/>
<text transform="translate(453,149) scale(.9,1)" font-family="Liberation Sans, sans-serif" font-size="10.8" fill="#9a2a3a">SiO2 on Si (Calculated)</text>
</svg>

<!-- right panel -->
<div class="abs" style="left:1096px;top:101px;width:197px;height:42px;background:#fdfdfd"></div>
<svg class="abs" style="left:1096px;top:100px" width="198" height="44" viewBox="1096 100 198 44"><text x="1099" y="132" font-family="Liberation Sans, sans-serif" font-weight="bold" font-style="italic" font-size="40" fill="#2a5ea6" stroke="#2a5ea6" stroke-width="1.3" textLength="189" lengthAdjust="spacingAndGlyphs">FILMETRICS</text><polygon points="1164.8,130 1171.3,130 1170.2,140.6 1164,140.6" fill="#2a5ea6"/><line x1="1175.2" y1="135" x2="1174.0" y2="140.5" stroke="#a07860" stroke-width="1"/><line x1="1182.6" y1="135" x2="1181.4" y2="140.5" stroke="#a07860" stroke-width="1"/><line x1="1190.0" y1="135" x2="1188.8" y2="140.5" stroke="#a07860" stroke-width="1"/><line x1="1197.4" y1="135" x2="1196.2" y2="140.5" stroke="#a07860" stroke-width="1"/><line x1="1204.8" y1="135" x2="1203.6" y2="140.5" stroke="#a07860" stroke-width="1"/><line x1="1212.2" y1="135" x2="1211.0" y2="140.5" stroke="#a07860" stroke-width="1"/><line x1="1219.6" y1="135" x2="1218.4" y2="140.5" stroke="#a07860" stroke-width="1"/><line x1="1227.0" y1="135" x2="1225.8" y2="140.5" stroke="#a07860" stroke-width="1"/><line x1="1234.4" y1="135" x2="1233.2" y2="140.5" stroke="#a07860" stroke-width="1"/><line x1="1241.8" y1="135" x2="1240.6" y2="140.5" stroke="#a07860" stroke-width="1"/><line x1="1249.2" y1="135" x2="1248.0" y2="140.5" stroke="#a07860" stroke-width="1"/><line x1="1256.6" y1="135" x2="1255.4" y2="140.5" stroke="#a07860" stroke-width="1"/><line x1="1264.0" y1="135" x2="1262.8" y2="140.5" stroke="#a07860" stroke-width="1"/><line x1="1271.4" y1="135" x2="1270.2" y2="140.5" stroke="#a07860" stroke-width="1"/><line x1="1278.8" y1="135" x2="1277.6" y2="140.5" stroke="#a07860" stroke-width="1"/><line x1="1286.2" y1="135" x2="1285.0" y2="140.5" stroke="#a07860" stroke-width="1"/></svg>
<div class="grp" style="left:1097px;top:153px;width:196px;height:52px"></div>
<div class="abs" style="left:1101px;top:148px;width:56px;height:10px;background:#f0f0f0"></div>
<div class="t" style="left:1102px;top:150px;font-size:10px;color:#222">Sample Info</div>
<div class="t" style="left:1106px;top:167px;font-size:10px;color:#222">Sample ID:</div>
<div class="tb" style="left:1162px;top:163px;width:130px;height:17px"></div>
<div class="t" style="left:1165px;top:167px;font-size:10px;color:#222">SiO2 on Si</div>
<div class="t" style="left:1102px;top:188px;font-size:10px;color:#222;transform-origin:0 0;transform:scaleX(.97)">Operator ID:</div>
<div class="tb" style="left:1162px;top:185px;width:130px;height:16px"></div>
<div class="t" style="left:1165px;top:188px;font-size:10px;color:#222">Filmetrics</div>

<div class="grp" style="left:1097px;top:216px;width:196px;height:80px"></div>
<div class="abs" style="left:1101px;top:211px;width:94px;height:10px;background:#f0f0f0"></div>
<div class="t" style="left:1102px;top:212px;font-size:10px;color:#222">Measurement Status</div>
<div class="t" style="left:1121px;top:244px;font-size:37.5px;color:#0a0a0a">1979.2 Å</div>

<div class="grp" style="left:1097px;top:306px;width:196px;height:84px"></div>
<div class="btn" style="left:1105px;top:313px;width:177px;height:38px"></div>
<div class="t" style="left:1167px;top:326px;font-size:12.7px;font-weight:bold;color:#111">Measure</div>
<div class="btn" style="left:1105px;top:359px;width:84px;height:21px"></div>
<div class="t sx" style="left:1118px;top:363px;font-size:13.8px;color:#111;transform:scaleX(.875)">Baseline...</div>
<div class="abs" style="left:1199px;top:359px;width:84px;height:21px;border:1px solid #c0c0c0;border-radius:3px;background:#f4f4f4"></div>
<div class="t sx" style="left:1220px;top:363px;font-size:13.5px;color:#555">Analyze</div>

<div class="grp" style="left:1097px;top:402px;width:196px;height:61px"></div>
<div class="abs" style="left:1100px;top:409px;width:172px;height:17px;background:#fff;border-top:1px solid #8a8a8a;border-left:1px solid #a0a0a0"></div>
<div class="t" style="left:1103px;top:413px;font-size:10px;color:#222">SiO2 on Si</div>
<div class="btn" style="left:1272px;top:410px;width:15px;height:15px;border-radius:2px"></div>
<svg class="abs" style="left:1276px;top:415px" width="7" height="5"><path d="M0,0 L7,0 L3.5,4z" fill="#111"/></svg>
<div class="btn" style="left:1124px;top:434px;width:141px;height:24px;border:1px solid #3c7fc0"></div>
<div class="abs" style="left:1125px;top:435px;width:139px;height:22px;border:1px dotted #333;border-radius:2px"></div>
<div class="t sx" style="left:1159px;top:439px;font-size:13.8px;color:#111;transform:scaleX(.875)">Edit Recipe...</div>

<div class="abs" style="left:1097px;top:480px;width:196px;height:3px;border-top:1px solid #e2e2e2;border-bottom:1px solid #e2e2e2"></div>
<div class="abs" style="left:1101px;top:475px;width:26px;height:11px;background:#f0f0f0"></div>
<div class="t" style="left:1102px;top:476px;font-size:10px;color:#c8c8c8">Color</div>

<div class="grp" style="left:1097px;top:496px;width:196px;height:265px"></div>
<div class="abs" style="left:1101px;top:491px;width:102px;height:10px;background:#f0f0f0"></div>
<div class="t" style="left:1102px;top:493px;font-size:10px;color:#222">Measurement Results</div>
<div class="abs" style="left:1099px;top:507px;width:192px;height:230px;background:#fff;border-top:1px solid #6a6a6a;border-left:1px solid #6a6a6a;border-right:1px solid #e8e8e8;border-bottom:1px solid #e8e8e8"></div>
<div class="t" style="left:1101px;top:511px;font-size:10px;color:#111">SiO2 = <b>1979.2 Å</b></div>
<div class="t" style="left:1101px;top:523px;font-size:10px;color:#111;transform-origin:0 0;transform:scaleX(.97)">Goodness of fit = 0.99296</div>
<div class="t" style="left:1126px;top:743px;font-size:10.2px;color:#111">Measurement #</div>
<div class="abs" style="left:1204px;top:741px;width:43px;height:15px;background:#d6d6d6;border-top:1px solid #c0c0c0;border-left:1px solid #b8b8b8"></div>
<div class="t" style="left:1207px;top:743px;font-size:13.5px;color:#666">459</div>

<!-- right splitter -->
<svg class="abs" style="left:1290px;top:140px" width="24" height="640" viewBox="1290 140 24 640">
<line x1="1303.5" y1="150" x2="1303.5" y2="763" stroke="#c4c4c4"/>
<line x1="1304.5" y1="150" x2="1304.5" y2="763" stroke="#fafafa"/>
<rect x="1300.5" y="173.5" width="6" height="6" fill="#f0f0f0" stroke="#b4b4b4"/><line x1="1302" y1="176.5" x2="1305" y2="176.5" stroke="#c8c8c8"/><rect x="1300.5" y="249.5" width="6" height="6" fill="#f0f0f0" stroke="#b4b4b4"/><line x1="1302" y1="252.5" x2="1305" y2="252.5" stroke="#c8c8c8"/><rect x="1300.5" y="342.5" width="6" height="6" fill="#f0f0f0" stroke="#b4b4b4"/><line x1="1302" y1="345.5" x2="1305" y2="345.5" stroke="#c8c8c8"/><rect x="1300.5" y="426.5" width="6" height="6" fill="#f0f0f0" stroke="#b4b4b4"/><line x1="1302" y1="429.5" x2="1305" y2="429.5" stroke="#c8c8c8"/><rect x="1300.5" y="477.5" width="6" height="6" fill="#f0f0f0" stroke="#b4b4b4"/><line x1="1302" y1="480.5" x2="1305" y2="480.5" stroke="#c8c8c8"/><rect x="1300.5" y="621.5" width="6" height="6" fill="#f0f0f0" stroke="#b4b4b4"/><line x1="1302" y1="624.5" x2="1305" y2="624.5" stroke="#c8c8c8"/>
<line x1="1303.5" y1="478" x2="1303.5" y2="482" stroke="#c8c8c8"/>
</svg>
</body></html>
